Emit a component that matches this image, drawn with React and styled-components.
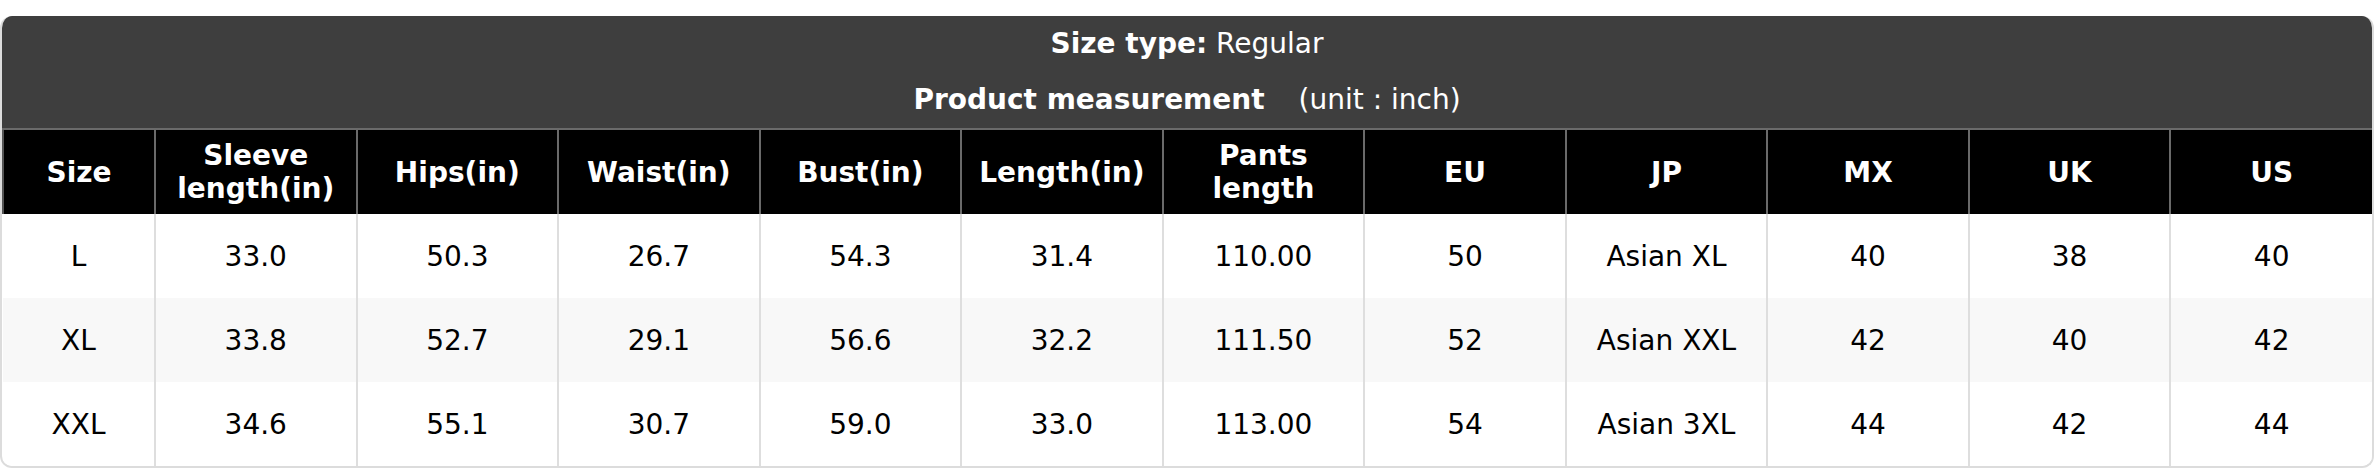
import styled, { createGlobalStyle } from "styled-components";

const GlobalStyle = createGlobalStyle`
  * { box-sizing: border-box; }
  body {
    margin: 0;
    background: #fff;
    font-family: "DejaVu Sans", "Noto Sans", sans-serif;
  }
`;

const columns = ["Size", "Sleeve length(in)", "Hips(in)", "Waist(in)", "Bust(in)", "Length(in)", "Pants length", "EU", "JP", "MX", "UK", "US"];

const rows = [
    ["L", "33.0", "50.3", "26.7", "54.3", "31.4", "110.00", "50", "Asian XL", "40", "38", "40"],
    ["XL", "33.8", "52.7", "29.1", "56.6", "32.2", "111.50", "52", "Asian XXL", "42", "40", "42"],
    ["XXL", "34.6", "55.1", "30.7", "59.0", "33.0", "113.00", "54", "Asian 3XL", "44", "42", "44"],
];

export default function App(){
    return(
        <Page>
            <GlobalStyle />
            <Card>
                <TitleBox>
                    <TitleLine><b>Size type:</b> Regular</TitleLine>
                    <TitleLine className="second"><b>Product measurement</b><Unit>(unit : inch)</Unit></TitleLine>
                </TitleBox>
                <Table>
                    <colgroup>
                        <col style={{ width: "152px" }} />
                        {columns.slice(1).map((c) => <col key={c} />)}
                    </colgroup>
                    <thead>
                        <tr>
                            {columns.map((c) => <Th key={c}>{c}</Th>)}
                        </tr>
                    </thead>
                    <tbody>
                        {rows.map((r, i) => (
                            <Row key={r[0]} striped={i % 2 === 1}>
                                {r.map((v, j) => <Td key={j}>{v}</Td>)}
                            </Row>
                        ))}
                    </tbody>
                </Table>
            </Card>
        </Page>
    )
}

const Page = styled.div`
    padding-top: 16px;
    width: 2376px;
`

const Card = styled.div`
    width: 2374px;
    border: 2px solid #dcdcdc;
    border-top: none;
    border-radius: 12px;
    overflow: hidden;
    background: #fff;
`

const TitleBox = styled.div`
    background: #3e3e3e;
    color: #fff;
    font-size: 28px;
    text-align: center;
    padding: 8px 0 8px 0;

    .second{
        margin-top: 16px;
    }
`

const TitleLine = styled.div`
    line-height: 40px;
`

const Unit = styled.span`
    margin-left: 34px;
    font-weight: normal;
`

const Table = styled.table`
    width: 100%;
    border-collapse: collapse;
    table-layout: fixed;
    font-size: 28px;
`

const Th = styled.th`
    height: 85px;
    background: #000;
    color: #fff;
    font-weight: bold;
    line-height: 33px;
    padding: 0 10px;
    border: 2px solid #6a6a6a;
    border-bottom: none;

    &:first-child{
        border-left-color: #555;
    }
    &:last-child{
        border-right: none;
    }
`

const Row = styled.tr`
    background: ${(p) => (p.striped ? "#f8f8f8" : "#fff")};
`

const Td = styled.td`
    height: 84px;
    text-align: center;
    color: #000;
    padding: 0 10px;
    border-left: 2px solid #dedede;

    &:first-child{
        border-left: none;
    }
`
